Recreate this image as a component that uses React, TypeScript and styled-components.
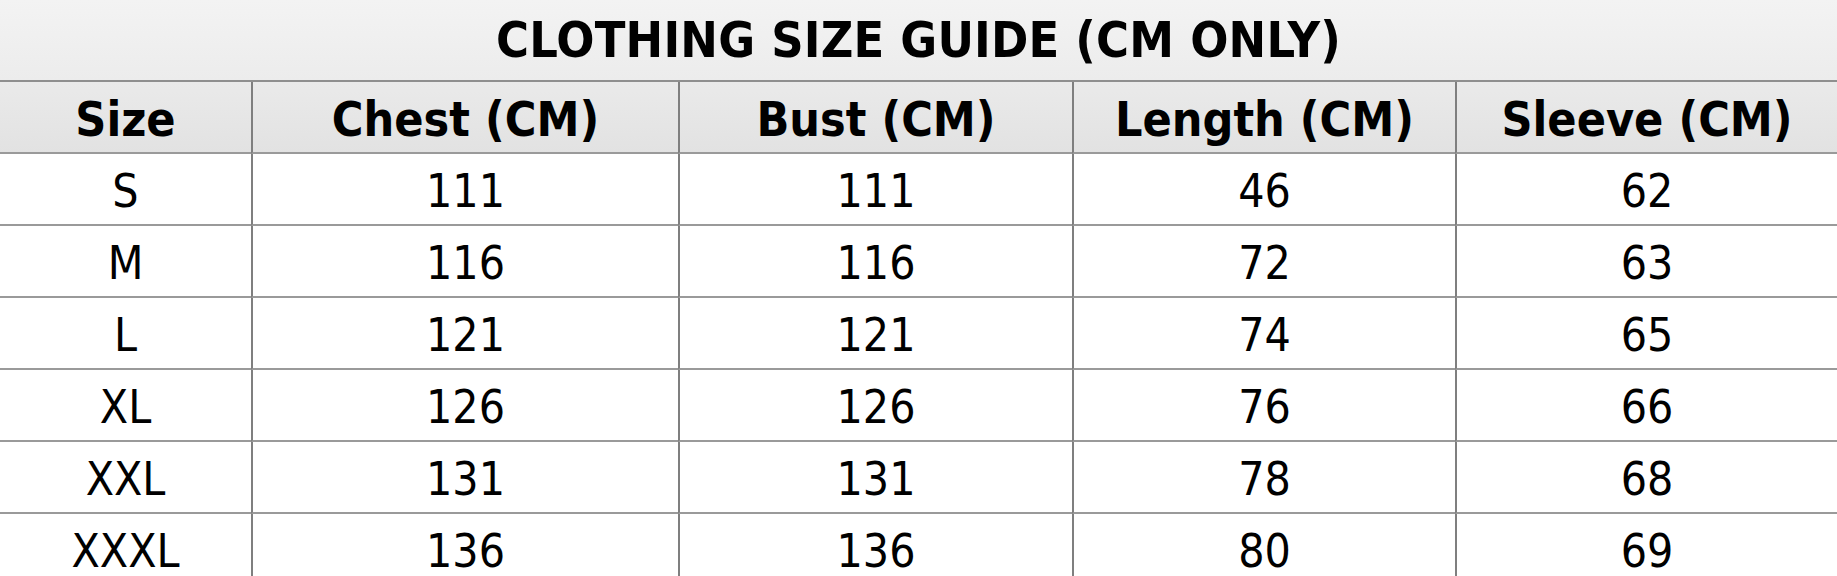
import * as React from 'react'
import styled, { createGlobalStyle } from 'styled-components'

const GlobalStyle = createGlobalStyle`
  html, body {
    margin: 0;
    padding: 0;
    background: #ffffff;
  }
  body {
    font-family: 'DejaVu Sans Condensed', 'DejaVu Sans', sans-serif;
    color: #000;
  }
`

const Page = styled.div`
  width: 1837px;
  height: 576px;
  overflow: hidden;
  background: #ffffff;
`

const TitleBar = styled.div`
  height: 80px;
  display: flex;
  align-items: center;
  justify-content: center;
  background: linear-gradient(#f3f3f3, #ececec);
  border-bottom: 2px solid #8f8f8f;
  font-size: 50px;
  font-weight: 700;
  letter-spacing: 0.2px;
`

const Grid = styled.div`
  display: grid;
  grid-template-columns: 251px 427px 394px 383px 1fr;
`

const Cell = styled.div<{ $head?: boolean; $first?: boolean }>`
  height: 72px;
  box-sizing: border-box;
  display: flex;
  align-items: center;
  justify-content: center;
  border-bottom: 2px solid #9a9a9a;
  border-left: ${p => (p.$first ? 'none' : '2px solid #7f7f7f')};
  background: ${p => (p.$head ? 'linear-gradient(#eaeaea, #e2e2e2)' : '#ffffff')};
  font-size: ${p => (p.$head ? '48px' : '46px')};
  font-weight: ${p => (p.$head ? 700 : 400)};
  padding-top: 3px;
`

const headers = ['Size', 'Chest (CM)', 'Bust (CM)', 'Length (CM)', 'Sleeve (CM)']

const rows: string[][] = [
  ['S', '111', '111', '46', '62'],
  ['M', '116', '116', '72', '63'],
  ['L', '121', '121', '74', '65'],
  ['XL', '126', '126', '76', '66'],
  ['XXL', '131', '131', '78', '68'],
  ['XXXL', '136', '136', '80', '69'],
]

const App: React.FC = () => {
  return (
    <Page>
      <GlobalStyle />
      <TitleBar>CLOTHING SIZE GUIDE (CM ONLY)</TitleBar>
      <Grid>
        {headers.map((h, i) => (
          <Cell key={h} $head $first={i === 0}>
            {h}
          </Cell>
        ))}
        {rows.map((r, ri) =>
          r.map((v, ci) => (
            <Cell key={`${ri}-${ci}`} $first={ci === 0}>
              {v}
            </Cell>
          ))
        )}
      </Grid>
    </Page>
  )
}

export default App
